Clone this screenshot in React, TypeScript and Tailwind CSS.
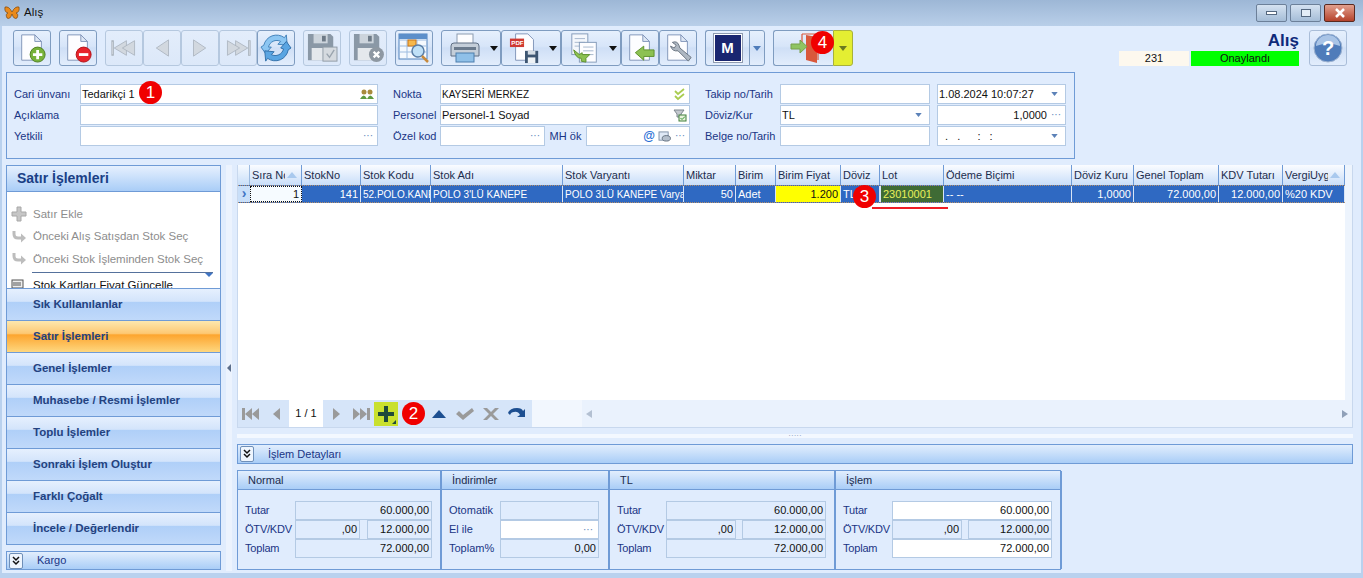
import type { ReactNode } from "react";

const barGradient = "bg-[linear-gradient(#e6f0fe,#d3e4fb_40%,#afcff8_42%,#c0d9fa)]";
const btnGradient = "bg-[linear-gradient(#e6f0fd,#d7e5f9_45%,#cfdff6_50%,#e2edfc)]";

function Badge({ n, className }: { n: number; className: string }) {
  return (
    <span className={"absolute z-10 flex h-[23px] w-[23px] items-center justify-center rounded-full bg-[#f00000] text-[17px] leading-none text-white " + className}>
      {n}
    </span>
  );
}

function Page({ children, stroke = "#7f93b8" }: { children?: ReactNode; stroke?: string }) {
  return (
    <svg viewBox="0 0 32 32" className="h-[30px] w-[30px]">
      <path d="M5 2h14l7 7v20H5z" fill="#fdfdff" stroke={stroke} />
      <path d="M19 2v7h7z" fill="#dfe8f5" stroke={stroke} />
      {children}
    </svg>
  );
}

function Triangles({ dir, count, bar }: { dir: "l" | "r"; count: number; bar?: boolean }) {
  const flip = dir === "r" ? "scale(-1,1) translate(-32,0)" : undefined;
  return (
    <svg viewBox="0 0 32 32" className="h-[26px] w-[30px]">
      <g transform={flip} fill="#d2d8df" stroke="#a9b2bc">
        {bar && <rect x="1" y="7" width="2" height="18" />}
        {count === 2 && <path d="M4 16 19 7v18z" />}
        {count === 2 && <path d="M14 16 29 7v18z" />}
        {count === 1 && <path d="M9 16 24 6v20z" />}
      </g>
    </svg>
  );
}

function RefreshIcon() {
  return (
    <svg viewBox="0 0 32 32" className="h-[30px] w-[32px]">
      <path d="M8 15a9 9 0 0 1 13-6l-3 3 10 1-1-11-2 3A14 14 0 0 0 3 13L0 15l5 7 6-7z" fill="#8cc6f2" stroke="#3f7fb8" />
      <path d="M24 17a9 9 0 0 1-13 6l3-3-10-1 1 11 2-3a14 14 0 0 0 22-9l3-2-5-7-6 7z" fill="#5aa5e2" stroke="#2f6ea8" />
    </svg>
  );
}

function Floppy({ mark }: { mark: "check" | "x" }) {
  return (
    <svg viewBox="0 0 36 32" className="h-[30px] w-[34px]">
      <path d="M3 1h24l3 3v25H3z" fill="#8a98a6" />
      <rect x="9" y="1" width="15" height="10" fill="#ccd4dc" />
      <rect x="18" y="3" width="4" height="6" fill="#6d7a87" />
      <rect x="7" y="16" width="19" height="13" fill="#e4e8ec" />
      {mark === "check" ? (
        <g>
          <rect x="19" y="15" width="15" height="15" fill="#d5dadf" stroke="#8f9aa5" />
          <path d="m23 22 3 4 5-8" fill="none" stroke="#9aa4ae" strokeWidth="1.5" />
        </g>
      ) : (
        <g>
          <circle cx="27" cy="23" r="8" fill="#8e98a2" />
          <path d="m24 20 6 6m0-6-6 6" stroke="#fff" strokeWidth="2.5" />
        </g>
      )}
    </svg>
  );
}

function TableSearch() {
  return (
    <svg viewBox="0 0 34 32" className="h-[32px] w-[34px]">
      <rect x="2" y="2" width="28" height="25" fill="#f5f9fe" stroke="#4f81bd" />
      <path d="M2 8h28M2 14h28M2 20h28M10 8v19M20 8v19" stroke="#9dbce0" fill="none" />
      <rect x="2" y="2" width="28" height="5" fill="#5c8fca" />
      <rect x="11" y="8" width="8" height="6" fill="#f7b84b" stroke="#c9761b" />
      <circle cx="21" cy="19" r="6" fill="#bfe0f7" stroke="#5a7ea6" strokeWidth="1.5" />
      <path d="m25 24 6 6" stroke="#c78a3d" strokeWidth="2.5" />
    </svg>
  );
}

function Printer() {
  return (
    <svg viewBox="0 0 34 32" className="h-[32px] w-[34px]">
      <rect x="9" y="2" width="16" height="11" fill="#fdfdfe" stroke="#8b9bb0" />
      <path d="M3 14q0-3 3-3h22q3 0 3 3v10H3z" fill="#c4ced9" stroke="#5e6f84" />
      <rect x="8" y="21" width="18" height="9" fill="#8fc0e8" stroke="#4d7fae" />
      <rect x="6" y="15" width="22" height="3" fill="#6a7a8c" />
    </svg>
  );
}

function PdfSave() {
  return (
    <svg viewBox="0 0 34 32" className="h-[32px] w-[32px]">
      <path d="M7 1h13l6 6v22H7z" fill="#fdfdff" stroke="#7f93b8" />
      <rect x="1" y="6" width="15" height="9" fill="#cf3a32" />
      <text x="2.5" y="13" fontSize="6.5" fontWeight="700" fill="#fff" fontFamily="Liberation Sans, sans-serif">PDF</text>
      <path d="M17 19h14v13H17z" fill="#3d5572" />
      <rect x="20" y="19" width="8" height="4" fill="#d5dde6" />
      <rect x="20" y="26" width="8" height="6" fill="#eef2f6" />
    </svg>
  );
}

function CopyDocs() {
  return (
    <svg viewBox="0 0 34 32" className="h-[32px] w-[32px]">
      <rect x="3" y="1" width="17" height="22" fill="#f4f7fc" stroke="#8399b8" />
      <path d="M6 6h11M6 10h11M6 14h11" stroke="#a4b5cc" />
      <rect x="11" y="10" width="18" height="21" fill="#fdfdff" stroke="#8399b8" />
      <path d="M15 15h11M15 19h11M15 23h11" stroke="#a4b5cc" />
      <path d="M5 18l6 5 3-2 0 2h8l-4 4 0 4-5-1v-3q-6 0-8-9z" fill="#8cc152" stroke="#5c8f2a" />
    </svg>
  );
}

function DocArrow() {
  return (
    <Page>
      <path d="M11 21l9-7v4h11v7H20v4z" fill="#8cc152" stroke="#5c8f2a" />
    </Page>
  );
}

function DocWrench() {
  return (
    <Page>
      <path d="M10 10q5-2 7 3l1 3 12 10-3 4-11-11q-6 1-8-5l4 2 2-3z" fill="#aeb7c2" stroke="#67727f" />
    </Page>
  );
}

function ExitDoor() {
  return (
    <svg viewBox="0 0 30 32" className="h-[32px] w-[30px]">
      <path d="M12 2h16v26" fill="none" stroke="#d9583b" strokeWidth="1.2" />
      <path d="M16 3l11 2v26l-11-3z" fill="#d9583b" />
      <path d="M12 2v10" fill="none" stroke="#d9583b" strokeWidth="1.2" />
      <path d="M1 12h9V8l7 6.500-7 6.500v-4H1z" fill="#8fc462" stroke="#79a04a" />
    </svg>
  );
}

function HelpIcon() {
  return (
    <svg viewBox="0 0 30 30" className="h-[30px] w-[30px]">
      <circle cx="15" cy="15" r="14" fill="#4f7cba" stroke="#9fb4d1" />
      <path d="M3 13a12 11 0 0 1 24 0q-12-5-24 0z" fill="#a9c4e6" />
      <text x="15" y="22" textAnchor="middle" fontSize="20" fontWeight="700" fill="#fff" fontFamily="Liberation Sans, sans-serif">?</text>
    </svg>
  );
}

function Btn({ children, className = "w-[38px]", off }: { children: ReactNode; className?: string; off?: boolean }) {
  return (
    <div className={"flex h-[36px] items-center justify-center rounded-[3px] border " + (off ? "border-[#b5c8df] bg-[linear-gradient(#e3edfb,#dce8f9)] " : "border-[#7f9cc0] " + btnGradient + " ") + className}>
      {children}
    </div>
  );
}

function Caret({ color = "#111" }: { color?: string }) {
  return (
    <svg viewBox="0 0 8 5" className="h-[5px] w-[8px]">
      <path d="M0 0h8L4 5z" fill={color} />
    </svg>
  );
}

function Toolbar() {
  return (
    <div className="flex h-[44px] shrink-0 items-center pl-[13px] pr-[16px]">
      <div className="flex items-center">
        <Btn>
          <Page>
            <circle cx="22" cy="23" r="8" fill="#77b23a" stroke="#4f7f22" />
            <path d="M22 18v10M17 23h10" stroke="#fff" strokeWidth="3" />
          </Page>
        </Btn>
        <Btn className="ml-[8px] w-[38px]">
          <Page>
            <circle cx="22" cy="23" r="8" fill="#e8222a" stroke="#b01218" />
            <path d="M17 23h10" stroke="#fff" strokeWidth="3" />
          </Page>
        </Btn>
        <Btn off className="ml-[8px] w-[38px]"><Triangles dir="l" count={2} bar /></Btn>
        <Btn off><Triangles dir="l" count={1} /></Btn>
        <Btn off><Triangles dir="r" count={1} /></Btn>
        <Btn off><Triangles dir="r" count={2} bar /></Btn>
        <Btn><RefreshIcon /></Btn>
        <Btn off className="ml-[8px] w-[38px]"><Floppy mark="check" /></Btn>
        <Btn off className="ml-[8px] w-[38px]"><Floppy mark="x" /></Btn>
        <Btn className="ml-[8px] w-[38px]"><TableSearch /></Btn>
        <Btn className="ml-[8px] w-[60px] gap-[8px] pl-[3px]"><Printer /><Caret /></Btn>
        <Btn className="w-[60px] gap-[8px] pl-[3px]"><PdfSave /><Caret /></Btn>
        <Btn className="w-[60px] gap-[8px] pl-[3px]"><CopyDocs /><Caret /></Btn>
        <Btn><DocArrow /></Btn>
        <Btn><DocWrench /></Btn>
        <div className="ml-[8px] flex">
          <Btn className="w-[44px] rounded-r-none border-r-0">
            <div className="flex h-[30px] w-[30px] items-center justify-center border border-[#8f9bb0] bg-white">
              <div className="flex h-[26px] w-[26px] items-center justify-center bg-[#1a2670] text-[15px] font-bold text-white">M</div>
            </div>
          </Btn>
          <Btn className="w-[16px] rounded-l-none"><Caret color="#4f7cba" /></Btn>
        </div>
        <div className="relative ml-[8px] flex">
          <Btn className="w-[60px] justify-end rounded-r-none border-r-0 pr-[13px]"><ExitDoor /></Btn>
          <div className="flex h-[36px] w-[20px] items-center justify-center rounded-r-[3px] border border-[#a8b13a] bg-[#e4ee32]"><Caret color="#6a7a20" /></div>
          <Badge n={4} className="left-[38px] top-[1px]" />
        </div>
      </div>
      <div className="ml-auto flex items-center gap-[10px]">
        <div className="flex flex-col items-end">
          <div className="text-[17px] font-bold leading-[21px] text-[#0d2a7a]">Alış</div>
          <div className="flex gap-[2px] text-[11px] leading-[15px] text-[#111]">
            <div className="w-[70px] bg-[#fdf8ee] text-center">231</div>
            <div className="w-[108px] bg-[#00ff00] text-center">Onaylandı</div>
          </div>
        </div>
        <Btn className="w-[38px] border-[#a9bdd8]"><HelpIcon /></Btn>
      </div>
    </div>
  );
}

function Field({ children, className = "", right }: { children?: ReactNode; className?: string; right?: ReactNode }) {
  return (
    <div className={"flex h-[20px] items-center border border-[#b4cae4] bg-white px-[1px] text-[11px] text-[#111] " + className}>
      <div className="min-w-0 flex-1 whitespace-nowrap">{children}</div>
      {right}
    </div>
  );
}

function Dots() {
  return <span className="ml-[4px] mr-[3px] text-[10px] leading-none text-[#5c82b8]">···</span>;
}

function Drop() {
  return (
    <span className="mr-[6px]">
      <svg viewBox="0 0 8 5" className="h-[4px] w-[7px]"><path d="M0 0h8L4 5z" fill="#5c82b8" /></svg>
    </span>
  );
}

function FormLabel({ children, className = "" }: { children: ReactNode; className?: string }) {
  return <div className={"flex items-center text-[11px] text-[#1a3585] " + className}>{children}</div>;
}

function TopForm() {
  return (
    <div className="ml-[6px] mt-[2px] h-[87px] w-[1069px] shrink-0 border border-[#6f9bd6] pl-[7px] pt-[11px]">
      <div className="grid grid-cols-[66px_298px_62px_250px_90px_150px_7px_129px] gap-y-px">
        <FormLabel>Cari ünvanı</FormLabel>
        <div className="relative">
          <Field right={
            <svg viewBox="0 0 14 12" className="mr-[2px] h-[12px] w-[14px]">
              <circle cx="4" cy="4" r="2.5" fill="#a88b3c" /><circle cx="10" cy="4" r="2.5" fill="#a88b3c" />
              <path d="M0 11q4-7 7 0zm7 0q3-7 7 0z" fill="#5d9a3f" />
            </svg>
          }>Tedarikçi 1</Field>
          <Badge n={1} className="left-[59px] top-[-3px]" />
        </div>
        <FormLabel className="pl-[15px]">Nokta</FormLabel>
        <Field right={
          <svg viewBox="0 0 14 14" className="mr-[1px] h-[14px] w-[14px]">
            <path d="m2 4 3 3 6-5M2 9l3 3 6-5" fill="none" stroke="#a9cc50" strokeWidth="1.8" />
          </svg>
        }><span className="text-[10px]">KAYSERİ MERKEZ</span></Field>
        <FormLabel className="pl-[15px]">Takip no/Tarih</FormLabel>
        <Field />
        <div />
        <Field right={<Drop />}>1.08.2024 10:07:27</Field>

        <FormLabel>Açıklama</FormLabel>
        <Field />
        <FormLabel className="pl-[15px]">Personel</FormLabel>
        <Field right={
          <svg viewBox="0 0 14 14" className="mr-[1px] h-[14px] w-[14px]">
            <path d="M1 2h10L8 6v3H4V6z" fill="#c4c9cf" stroke="#7d868f" />
            <rect x="6" y="7" width="7" height="6" fill="#e8f3dc" stroke="#3f7f3a" />
            <path d="m7.500 10 1.500 1.500 3-3" fill="none" stroke="#2f8f2f" />
          </svg>
        }>Personel-1 Soyad</Field>
        <FormLabel className="pl-[15px]">Döviz/Kur</FormLabel>
        <Field right={<Drop />}>TL</Field>
        <div />
        <Field className="text-right" right={<Dots />}>1,0000</Field>

        <FormLabel>Yetkili</FormLabel>
        <Field right={<Dots />} />
        <FormLabel className="pl-[15px]">Özel kod</FormLabel>
        <div className="flex">
          <Field className="w-[105px]" right={<Dots />} />
          <FormLabel className="w-[41px] justify-center">MH ök</FormLabel>
          <Field className="w-[104px]" right={
            <span className="flex items-center">
              <span className="mr-[3px] text-[12px] font-bold leading-none text-[#2a6fd6]">@</span>
              <svg viewBox="0 0 14 12" className="h-[11px] w-[13px]"><rect x="1" y="1" width="10" height="9" fill="#dfe9f6" stroke="#7c8ea5" /><ellipse cx="9" cy="8" rx="4.500" ry="3" fill="#b4bfcc" stroke="#5f6c7c" /></svg>
              <Dots />
            </span>
          } />
        </div>
        <FormLabel className="pl-[15px]">Belge no/Tarih</FormLabel>
        <Field />
        <div />
        <Field right={<Drop />}><span className="pl-[6px] tracking-[1px]">.&nbsp;&nbsp;.&nbsp;&nbsp;&nbsp;&nbsp;:&nbsp;&nbsp;:</span></Field>
      </div>
    </div>
  );
}

function PlusGrey() {
  return (
    <svg viewBox="0 0 16 16" className="h-[16px] w-[16px] shrink-0">
      <path d="M6 1h4v5h5v4h-5v5H6v-5H1V6h5z" fill="#c6c6c6" stroke="#a8a8a8" />
    </svg>
  );
}

function BackArrow() {
  return (
    <svg viewBox="0 0 16 16" className="h-[16px] w-[16px] shrink-0">
      <path d="M3 2v3q0 4 4 4h4" fill="none" stroke="#bdbdbd" strokeWidth="3" />
      <path d="M10 4.500 15 9l-5 4.500z" fill="#bdbdbd" />
    </svg>
  );
}

const accordion = [
  "Sık Kullanılanlar",
  "Satır İşlemleri",
  "Genel İşlemler",
  "Muhasebe / Resmi İşlemler",
  "Toplu İşlemler",
  "Sonraki İşlem Oluştur",
  "Farklı Çoğalt",
  "İncele / Değerlendir",
];

function Chevrons() {
  return (
    <div className="flex h-[16px] w-[14px] items-center justify-center rounded-[2px] border border-[#6f8fb8] bg-[#eef5fe]">
      <svg viewBox="0 0 10 10" className="h-[10px] w-[10px]">
        <path d="m2 1 3 3 3-3M2 5l3 3 3-3" fill="none" stroke="#111" strokeWidth="1.500" />
      </svg>
    </div>
  );
}

function LeftPanel() {
  return (
    <div className="flex h-full w-[215px] shrink-0 flex-col">
      <div className="flex h-[27px] shrink-0 items-center border border-[#6f9bd6] bg-[linear-gradient(#e6f0fe,#a9cdf7)] pl-[10px] text-[14px] font-bold text-[#1a3f86]">
        Satır İşlemleri
      </div>
      <div className="h-[96px] shrink-0 overflow-hidden border-x border-[#6f9bd6] bg-white pl-[4px] pt-[11px] text-[11.500px] text-[#8d8d8d]">
        <div className="flex h-[22.500px] items-center gap-[6px]"><PlusGrey />Satır Ekle</div>
        <div className="flex h-[22.500px] items-center gap-[6px]"><BackArrow />Önceki Alış Satışdan Stok Seç</div>
        <div className="flex h-[22.500px] items-center gap-[6px]"><BackArrow />Önceki Stok İşleminden Stok Seç</div>
        <div className="relative ml-[21px] mr-[7px] mt-[1px] border-t border-[#55719c]">
          <svg viewBox="0 0 8 4" className="absolute right-0 top-0 h-[4px] w-[8px]"><path d="M0 0h8L4 4z" fill="#3f74c4" /></svg>
        </div>
        <div className="flex h-[26px] items-center gap-[6px] text-[#111]">
          <svg viewBox="0 0 16 16" className="h-[16px] w-[16px] shrink-0"><rect x="1" y="2" width="11" height="8" fill="#eee" stroke="#555" /><path d="M3 4v4M5 4v4M7 4v4M9 4v4" stroke="#555" /></svg>
          Stok Kartları Fiyat Güncelle
        </div>
      </div>
      <div className="shrink-0 border-b border-[#6f9bd6]">
        {accordion.map((t, i) => (
          <div
            key={t}
            className={
              "flex h-[32px] items-center border-x border-t border-[#6f9bd6] pl-[26px] text-[11.500px] font-bold text-[#24427f] " +
              (i === 1 ? "bg-[linear-gradient(#fde7ae,#fdc873_40%,#fda52f_45%,#fed77f)]" : barGradient)
            }
          >
            {t}
          </div>
        ))}
      </div>
      <div className="mt-[6px] flex h-[19px] shrink-0 items-center border border-[#6f9bd6] bg-[linear-gradient(#e2eefd,#a9cdf7)] pl-[2px] text-[11px] text-[#1a3585]">
        <Chevrons />
        <span className="ml-[14px]">Kargo</span>
      </div>
    </div>
  );
}

const columns = [
  { label: "Sıra No", w: "w-[52px]", value: "1", cell: "bg-[#f6fbff] text-right text-[#111] text-[11px] outline-1 -outline-offset-1 outline-dotted outline-[#111]", sort: true },
  { label: "StokNo", w: "w-[59px]", value: "141", cell: "text-right text-white text-[11px]" },
  { label: "Stok Kodu", w: "w-[70px]", value: "52.POLO.KANEPE", cell: "text-white text-[10px]" },
  { label: "Stok Adı", w: "w-[132px]", value: "POLO 3'LÜ KANEPE", cell: "text-white text-[10px]" },
  { label: "Stok Varyantı", w: "w-[121px]", value: "POLO 3LÜ KANEPE Varyant", cell: "text-white text-[10px]" },
  { label: "Miktar", w: "w-[52px]", value: "50", cell: "text-right text-white text-[11px]" },
  { label: "Birim", w: "w-[40px]", value: "Adet", cell: "text-white text-[11px]" },
  { label: "Birim Fiyat", w: "w-[65px]", value: "1.200", cell: "bg-[#ffff00] text-right text-[#111] text-[11px]" },
  { label: "Döviz", w: "w-[39px]", value: "TL", cell: "text-white text-[11px]" },
  { label: "Lot", w: "w-[64px]", value: "23010001", cell: "border-x border-[#c9d24a] bg-[#3f6b35] text-[#e8f05a] text-[11px]" },
  { label: "Ödeme Biçimi", w: "w-[128px]", value: "-- --", cell: "text-white text-[11px]" },
  { label: "Döviz Kuru", w: "w-[62px]", value: "1,0000", cell: "text-right text-white text-[11px]" },
  { label: "Genel Toplam", w: "w-[85px]", value: "72.000,00", cell: "text-right text-white text-[11px]" },
  { label: "KDV Tutarı", w: "w-[64px]", value: "12.000,00", cell: "text-right text-white text-[11px]" },
  { label: "VergiUyg", w: "w-[62px]", value: "%20 KDV", cell: "text-white text-[11px]", sort: true },
];

function NavIcon({ d, fill = "#9a9a9a" }: { d: string; fill?: string }) {
  return (
    <svg viewBox="0 0 20 16" className="h-[16px] w-[20px] shrink-0">
      <path d={d} fill={fill} />
    </svg>
  );
}

function GridPanel() {
  return (
    <div className="flex h-[263px] shrink-0 flex-col border-x border-b border-[#c8d8ee] bg-white">
      <div className="flex min-h-0 flex-1 flex-col border-r-[7px] border-r-[#edf4fd]">
        <div className="flex h-[20px] shrink-0 bg-[#e0ecfd]">
          <div className="w-[12px] shrink-0 border-r border-[#9dbbe0] bg-[linear-gradient(#f6faff,#c9dff9)]" />
          {columns.map((c) => (
            <div key={c.label} className={"flex shrink-0 items-center overflow-hidden whitespace-nowrap border-r border-[#6f9bd6] bg-[linear-gradient(#fafcff,#c8def9)] pl-[2px] text-[11px] text-[#1c2c4c] " + c.w}>
              <span className="min-w-0 flex-1 overflow-hidden">{c.label}</span>
              {c.sort && (
                <svg viewBox="0 0 10 6" className="mr-[4px] ml-[2px] h-[6px] w-[10px] shrink-0"><path d="M5 0l5 6H0z" fill="#a9c9ee" /></svg>
              )}
            </div>
          ))}
        </div>
        <div className="relative flex h-[18px] shrink-0 border-y border-dotted border-[#b58f6a] bg-[#2f69c2]">
          <div className="flex w-[12px] shrink-0 items-center justify-center bg-[#c9dff9] pb-[2px] text-[14px] font-bold leading-none text-[#3f74c4]">›</div>
          {columns.map((c) => (
            <div key={c.label} className={"shrink-0 overflow-hidden whitespace-nowrap border-r border-[#d7e4f6] px-[2px] leading-[17px] " + c.w + " " + c.cell}>
              {c.value}
            </div>
          ))}
          <Badge n={3} className="left-[615px] top-[-1px]" />
          <div className="absolute left-[634px] top-[21px] h-[2px] w-[76px] bg-[#ee1c25]" />
        </div>
      </div>
      <div className="flex h-[27px] shrink-0 items-center bg-[#f2f7fe]">
        <div className="flex h-full w-[294px] shrink-0 items-center bg-[#d6e5f9] pl-[3px]">
          <NavIcon d="M1 2h3v12H1zm3 6 7-6v12zm7 0 7-6v12z" />
          <div className="ml-[5px]"><NavIcon d="M7 8l7-6v12z" /></div>
          <div className="ml-[3px] flex h-full w-[34px] items-center justify-center bg-white text-[11px] text-[#111]">1 / 1</div>
          <div className="ml-[3px]"><NavIcon d="M14 8 7 2v12z" /></div>
          <div className="ml-[5px]"><NavIcon d="M2 2l7 6-7 6zm7 0 7 6-7 6zm7 0h3v12h-3z" /></div>
          <div className="ml-[3px] flex h-[24px] w-[24px] shrink-0 items-center justify-center bg-[#c9e02e]">
            <svg viewBox="0 0 20 20" className="h-[20px] w-[20px]">
              <path d="M8 2h4v6h6v4h-6v6H8v-6H2V8h6z" fill="#1f4a3a" />
              <path d="M20 16v4h-4z" fill="#1f4a3a" />
            </svg>
          </div>
          <div className="relative w-[31px] shrink-0"><Badge n={2} className="left-[4px] top-[-12px]" /></div>
          <NavIcon d="M3 12 10 4l7 8z" fill="#1d4f91" />
          <div className="ml-[6px]"><NavIcon d="M1 8l3-3 4 4 9-7 2 3-11 9z" /></div>
          <div className="ml-[6px]"><NavIcon d="M2 2h4l4 4 4-4h4l-6 6 6 6h-4l-4-4-4 4H2l6-6z" /></div>
          <div className="ml-[6px]"><NavIcon d="M1 7q2-5 9-5 5 0 6 3l2-2v8h-8l3-2q-2-4-6-3-3 0-4 3z" fill="#1d4f91" /></div>
        </div>
        <div className="ml-[50px] flex h-full flex-1 items-center justify-between bg-[#eaf2fd]">
          <NavIcon d="M10 4 4 8l6 4z" fill="#b3c0d2" />
          <NavIcon d="M10 4l6 4-6 4z" fill="#8fa0b8" />
        </div>
      </div>
    </div>
  );
}

function ValueBox({ children, className = "", white }: { children?: ReactNode; className?: string; white?: boolean }) {
  return (
    <div className={"flex h-[19px] items-center justify-end border border-[#b4cae4] pr-[2px] text-[11px] text-[#111] " + (white ? "bg-white " : "") + className}>
      {children}
    </div>
  );
}

function MoneyPanel({ title, className, fields, tax, taxL, taxR, white }: { title: string; className: string; fields: string; tax: string; taxL: string; taxR: string; white?: boolean }) {
  return (
    <div className={"flex h-full shrink-0 flex-col border-r-2 border-[#6f9bd6] " + className}>
      <div className="flex h-[19px] shrink-0 items-center border-b border-[#6f9bd6] bg-[linear-gradient(#e2eefd,#a9cdf7)] pl-[10px] text-[11px] text-[#1c2c4c]">{title}</div>
      <div className="flex flex-col pl-[7px] pt-[11px]">
        {[0, 1, 2].map((i) => (
          <div key={i} className="flex items-center text-[11px] text-[#1a3585]">
            <div className={"tracking-[-0.2px] " + tax}>{["Tutar", "ÖTV/KDV", "Toplam"][i]}</div>
            {i === 1 ? (
              <div className={"flex justify-between " + fields}>
                <ValueBox className={taxL}>,00</ValueBox>
                <ValueBox className={taxR}>12.000,00</ValueBox>
              </div>
            ) : (
              <ValueBox white={white} className={fields}>{i === 0 ? "60.000,00" : "72.000,00"}</ValueBox>
            )}
          </div>
        ))}
      </div>
    </div>
  );
}

function DetailPanels() {
  return (
    <div className="mt-[6px] flex h-[100px] w-[824px] shrink-0 border-y border-l border-[#6f9bd6]">
      <MoneyPanel title="Normal" className="w-[204px]" tax="w-[50px]" fields="w-[137px]" taxL="w-[65px]" taxR="w-[65px]" />
      <div className="flex h-full w-[168px] shrink-0 flex-col border-r-2 border-[#6f9bd6]">
        <div className="flex h-[19px] shrink-0 items-center border-b border-[#6f9bd6] bg-[linear-gradient(#e2eefd,#a9cdf7)] pl-[10px] text-[11px] text-[#1c2c4c]">İndirimler</div>
        <div className="flex flex-col pl-[7px] pt-[11px] text-[11px] text-[#1a3585]">
          <div className="flex items-center"><div className="w-[51px]">Otomatik</div><ValueBox className="w-[99px]" /></div>
          <div className="flex items-center"><div className="w-[51px]">El ile</div><ValueBox white className="w-[99px]"><Dots /></ValueBox></div>
          <div className="flex items-center"><div className="w-[51px]">Toplam%</div><ValueBox className="w-[99px]">0,00</ValueBox></div>
        </div>
      </div>
      <MoneyPanel title="TL" className="w-[226px]" tax="w-[49px]" fields="w-[160px]" taxL="w-[70px]" taxR="w-[84px]" />
      <MoneyPanel title="İşlem" className="w-[226px]" tax="w-[49px]" fields="w-[160px]" taxL="w-[70px]" taxR="w-[84px]" white />
    </div>
  );
}

export default function App() {
  return (
    <div className="flex h-[578px] w-[1363px] flex-col overflow-hidden bg-[#e0ecfd] font-['Liberation_Sans',sans-serif] shadow-[inset_2px_0_#b9d1ee,inset_-2px_0_#b9d1ee]">
      {/* Title bar */}
      <div className="flex h-[26px] shrink-0 items-center bg-[linear-gradient(#9db7d6,#b9cfe9)] pl-[4px] pr-[8px]">
        <svg viewBox="0 0 16 14" className="h-[14px] w-[16px]">
          <path d="M8 6Q5 0 1 1q-1 5 3 6-3 1-1 5 3 2 5-4 2 6 5 4 2-4-1-5 4-1 3-6-4-1-7 5z" fill="#e98a1c" stroke="#6b3a08" strokeWidth=".6" />
        </svg>
        <span className="ml-[4px] text-[11.500px] text-[#111]">Alış</span>
        <div className="ml-auto flex items-center gap-[3px]">
          <div className="flex h-[18px] w-[31px] items-center justify-center rounded-[2px] border border-[#6c8099] bg-[linear-gradient(#d5e2f1,#a5bdd7)]"><div className="h-[4px] w-[11px] border border-[#55687f] bg-white" /></div>
          <div className="flex h-[18px] w-[31px] items-center justify-center rounded-[2px] border border-[#6c8099] bg-[linear-gradient(#d5e2f1,#a5bdd7)]"><div className="h-[8px] w-[10px] border border-[#55687f] bg-[#e4edf6]" /></div>
          <div className="flex h-[18px] w-[31px] items-center justify-center rounded-[2px] border border-[#5a2a20] bg-[linear-gradient(#e2a08e,#b5432c)]">
            <svg viewBox="0 0 12 10" className="h-[10px] w-[12px]"><path d="M2 1l8 8m0-8-8 8" stroke="#fff" strokeWidth="2.500" /></svg>
          </div>
        </div>
      </div>

      <Toolbar />
      <TopForm />

      <div className="ml-[6px] mt-[6px] flex h-[406px] w-[1347px] shrink-0">
        <LeftPanel />
        <div className="flex w-[16px] shrink-0 justify-center">
          <div className="flex h-full w-[6px] items-center justify-center bg-[#ecf3fe]">
            <svg viewBox="0 0 4 8" className="h-[8px] w-[4px]"><path d="M4 0v8L0 4z" fill="#5c6f8c" /></svg>
          </div>
        </div>
        <div className="flex min-w-0 flex-1 flex-col">
          <GridPanel />
          <div className="flex h-[16px] shrink-0 items-center justify-center bg-[linear-gradient(#e0ecfd_35%,#f3f8ff_35%,#f3f8ff_60%,#e0ecfd_60%)] text-[8px] leading-none text-[#7d93b5]">
            ·····
          </div>
          <div className="flex h-[20px] shrink-0 items-center border border-[#6f9bd6] bg-[linear-gradient(#e2eefd,#a9cdf7)] pl-[2px] text-[11px] text-[#1a3585]">
            <Chevrons />
            <span className="ml-[14px]">İşlem Detayları</span>
          </div>
          <DetailPanels />
        </div>
      </div>
      <div className="mt-auto h-[5px] w-full shrink-0 bg-[#b9d1ee]" />
    </div>
  );
}
